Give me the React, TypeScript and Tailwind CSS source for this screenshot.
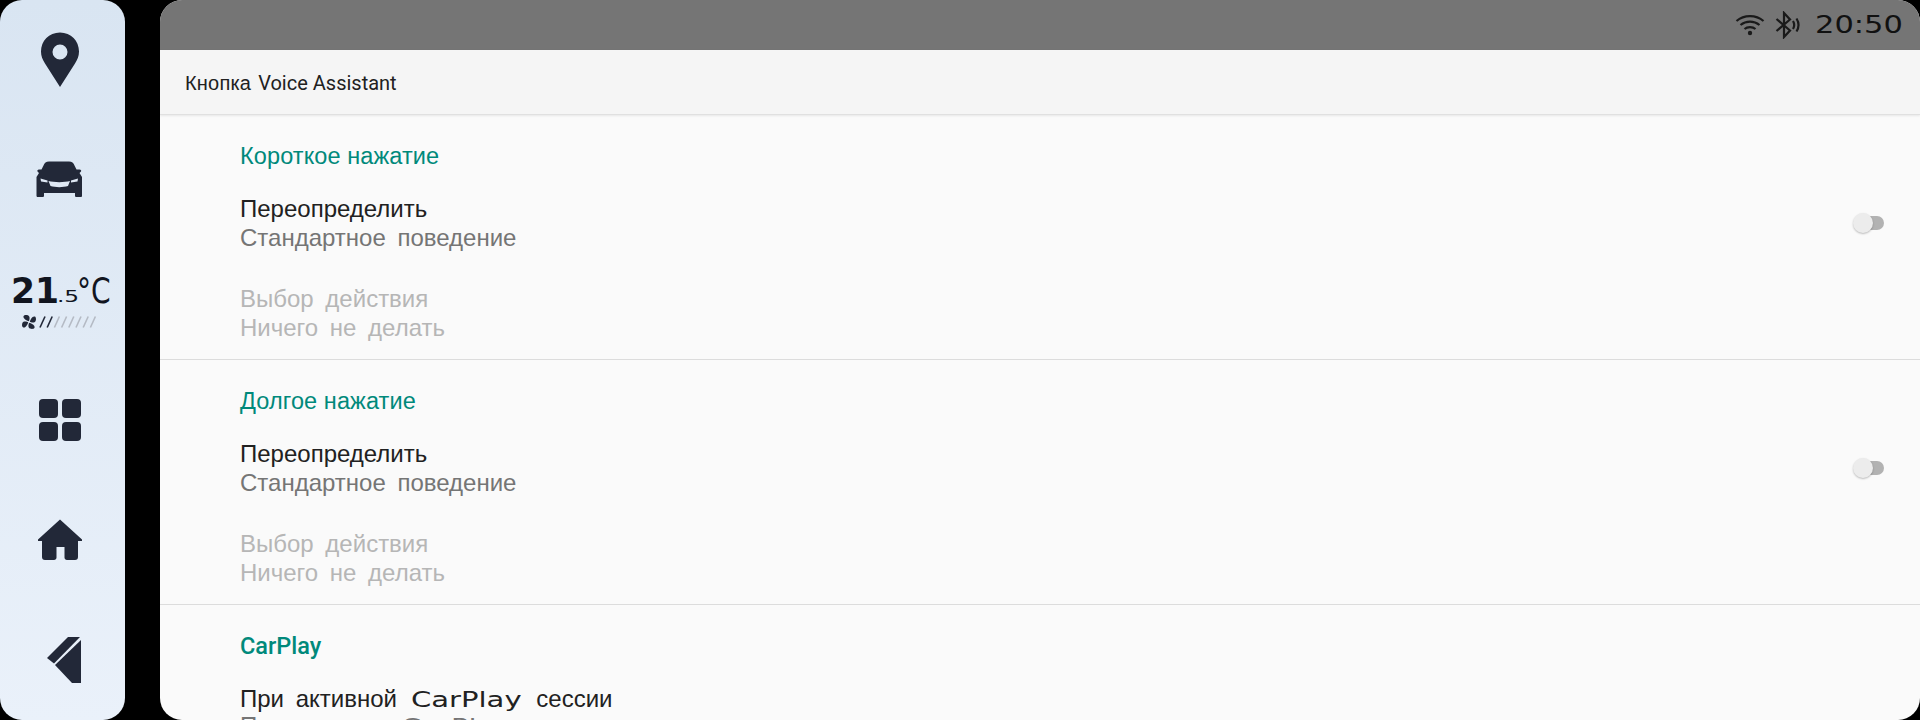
const INK = "#222838";

function Pin() {
  return (
    <svg width="40" height="56" viewBox="0 0 40 56">
      <path fillRule="evenodd" fill={INK} d="M20 0.5C9 0.5 1 9 1 19.5C1 24 2.5 27.5 5 31.5L20 55L35 31.5C37.5 27.5 39 24 39 19.5C39 9 31 0.5 20 0.5ZM20 12.5a7.5 7.5 0 1 1 0 15a7.5 7.5 0 1 1 0-15Z" />
    </svg>
  );
}

function Car() {
  return (
    <svg width="48" height="36" viewBox="0 0 48 36" className="mb-[3px]">
      <path fill={INK} d="M13 0.5H33C36 0.5 37.5 2 38.5 4.5L40.5 8.5H43.5C45 8.5 45.5 9.5 45 10.5L43.5 12L46 16V35C46 35.5 45.5 36 45 36H40.5C39.5 36 39 35.5 39 34.5V32H8V34.5C8 35.5 7.5 36 6.5 36H2C1 36 0.5 35.5 0.5 35V16L3 12L1.5 10.5C1 9.5 1.5 8.5 3 8.5H5.5L7.5 4.5C8.5 2 10 0.5 13 0.5Z" />
      <path fill="#dfe8f4" d="M4.5 17.5L11.5 19.5V21.5L5 20.5ZM42 17.5L35 19.5V21.5L41.5 20.5ZM12.5 20C18 21.5 28.5 21.5 34 20L32 25C27 26.5 19.5 26.5 14.5 25Z" />
    </svg>
  );
}

function Fan() {
  return (
    <svg width="14" height="14" viewBox="0 0 14 14">
      <g fill={INK}>
        <path d="M6.8 6.2C5 5.8 0.8 3.8 1.5 1.2C2.2-0.5 6.2-0.3 7.2 1.5C8 3 7.4 5.2 6.8 6.2Z" />
        <path d="M7.8 6.8C8.2 5 10.2 0.8 12.8 1.5C14.5 2.2 14.3 6.2 12.5 7.2C11 8 8.8 7.4 7.8 6.8Z" />
        <path d="M7.2 7.8C9 8.2 13.2 10.2 12.5 12.8C11.8 14.5 7.8 14.3 6.8 12.5C6 11 6.6 8.8 7.2 7.8Z" />
        <path d="M6.2 7.2C5.8 9 3.8 13.2 1.2 12.5C-0.5 11.8-0.3 7.8 1.5 6.8C3 6 5.2 6.6 6.2 7.2Z" />
      </g>
    </svg>
  );
}

function FanBars() {
  return (
    <svg width="58" height="12" viewBox="0 0 58 12" className="mr-[2px]">
      {[0, 1, 2, 3, 4, 5, 6, 7].map((i) => (
        <path key={i} d={`M${i * 7.2 + 1} 11.5L${i * 7.2 + 6} 0.5`} stroke={i < 2 ? INK : "#b4bac4"} strokeWidth="1.6" />
      ))}
    </svg>
  );
}

function Grid4() {
  return (
    <div className="grid grid-cols-2 gap-[4px]">
      {[0, 1, 2, 3].map((i) => (
        <div key={i} className="w-[19px] h-[19px] rounded-[4px] bg-[#222838]" />
      ))}
    </div>
  );
}

function Home() {
  return (
    <svg width="46" height="42" viewBox="0 0 46 42">
      <path fill={INK} d="M23 0.5L45 20.5V22H41V38C41 40 40 41 38 41H30C28.5 41 27.5 40 27.5 38.5V28H19.5V38.5C19.5 40 18.5 41 17 41H8C6 41 5 40 5 38V22H1V20.5Z" />
    </svg>
  );
}

function Back() {
  return (
    <svg width="36" height="48" viewBox="0 0 36 48" className="ml-[7px]">
      <path fill={INK} d="M22 1H34L8 27.5L1 22Z" />
      <path fill={INK} d="M35 4V47H26L9 29Z" />
    </svg>
  );
}

function Wifi() {
  return (
    <svg width="30" height="22" viewBox="0 0 30 22" fill="none" stroke="#1a1a1a" strokeWidth="2.2">
      <path d="M1.5 7C9 0.5 21 0.5 28.5 7" />
      <path d="M5.5 11C11 6.5 19 6.5 24.5 11" />
      <path d="M9.5 15C12.5 12.5 17.5 12.5 20.5 15" />
      <circle cx="15" cy="19" r="2.2" fill="#1a1a1a" stroke="none" />
    </svg>
  );
}

function Bluetooth() {
  return (
    <svg width="26" height="28" viewBox="0 0 26 28" fill="none" stroke="#1a1a1a" strokeWidth="2.2">
      <path d="M1.5 8L15 19.5L9 26V2L15 8.5L1.5 20" />
      <path d="M18 10C19.5 12.5 19.5 15.5 18 18" />
      <path d="M21.5 7.5C24 11.5 24 16.5 21.5 20.5" />
    </svg>
  );
}

function Tech({ children, className }: { children: React.ReactNode; className: string }) {
  return <span className={`inline-block origin-left font-['DejaVu_Sans',sans-serif] ${className}`}>{children}</span>;
}

function Toggle() {
  return (
    <div className="relative w-[31px] h-[20px] mr-[36px]">
      <div className="absolute right-0 top-[3px] w-[24px] h-[14px] rounded-full bg-[#b2b2b2]" />
      <div className="absolute left-0 top-0 w-[20px] h-[20px] rounded-full bg-[#ececec] shadow-[0_1px_2px_rgba(0,0,0,0.25)]" />
    </div>
  );
}

const BODY = "text-[24px] leading-[29px] font-['Liberation_Sans',sans-serif] [word-spacing:5px]";

function Section({ title }: { title: string }) {
  return (
    <section className="h-[245px] shrink-0 border-b border-[#dcdcdc] pl-[80px] pt-[27px]">
      <h2 className="text-[23.5px] leading-[28px] h-[28px] text-[#00897b] font-['Liberation_Sans',sans-serif] tracking-[0.1px]">{title}</h2>
      <div className="flex items-center mt-[24px] h-[58px]">
        <div className="flex-1">
          <div className={`${BODY} text-[#212121]`}>Переопределить</div>
          <div className={`${BODY} text-[#757575]`}>Стандартное поведение</div>
        </div>
        <Toggle />
      </div>
      <div className="mt-[32px]">
        <div className={`${BODY} text-[#b6b6b6]`}>Выбор действия</div>
        <div className={`${BODY} text-[#b6b6b6]`}>Ничего не делать</div>
      </div>
    </section>
  );
}

export default function App() {
  return (
    <div className="flex w-[1920px] h-[720px] bg-black overflow-hidden font-['Roboto',sans-serif]">
      <aside className="w-[125px] h-[720px] shrink-0 rounded-[22px] bg-gradient-to-b from-[#d9e5f2] to-[#eaf1fa] grid grid-rows-6 place-items-center pr-[5px]">
        <Pin />
        <Car />
        <div className="flex flex-col items-center mt-[4px]">
          <div className="flex items-end h-[30px] w-[99px] text-[#11151f] whitespace-nowrap">
            <Tech className="text-[36px] leading-[30px] font-bold scale-x-[0.96] w-[46px]">21</Tech>
            <Tech className="text-[16px] leading-[18px] scale-x-[1.45] w-[20px]">.5</Tech>
            <Tech className="text-[36px] leading-[30px] scale-x-[0.78] w-[33px]">°C</Tech>
          </div>
          <div className="flex items-center gap-[3px] mt-[9px]">
            <Fan />
            <FanBars />
          </div>
        </div>
        <Grid4 />
        <Home />
        <Back />
      </aside>
      <main className="ml-[35px] w-[1760px] h-[720px] rounded-[22px] overflow-hidden bg-[#fafafa] flex flex-col">
        <header className="h-[50px] shrink-0 bg-[#757575] flex items-center justify-end pr-[18px] gap-[10px]">
          <Wifi />
          <Bluetooth />
          <Tech className="ml-[4px] w-[87px] text-[24px] leading-none text-[#111] scale-x-[1.27] whitespace-nowrap">20:50</Tech>
        </header>
        <div className="h-[65px] shrink-0 bg-[#f5f5f5] border-b border-[#e0e0e0] shadow-[0_1px_2px_rgba(0,0,0,0.08)] flex items-center pl-[25px] pt-[2px] text-[20px] text-[#212121]">
          <span className="font-['Liberation_Sans',sans-serif] mr-[7px] tracking-[0.2px]">Кнопка</span>
          <span>Voice Assistant</span>
        </div>
        <Section title="Короткое нажатие" />
        <Section title="Долгое нажатие" />
        <section className="shrink-0 pl-[80px] pt-[27px]">
          <h2 className="text-[23.5px] leading-[28px] h-[28px] text-[#00897b] font-medium">CarPlay</h2>
          <div className={`mt-[24px] whitespace-nowrap ${BODY} text-[#212121]`}>
            При активной <Tech className="text-[22px] scale-x-[1.32] w-[108px] ml-[2px] mr-[6px] whitespace-nowrap">CarPlay</Tech> сессии
          </div>
          <div className={`whitespace-nowrap mt-[-3px] ${BODY} text-[#757575]`}>
            Поведение в <Tech className="text-[22px] scale-x-[1.32] w-[108px] ml-[2px] whitespace-nowrap">CarPlay</Tech>
          </div>
        </section>
      </main>
    </div>
  );
}
